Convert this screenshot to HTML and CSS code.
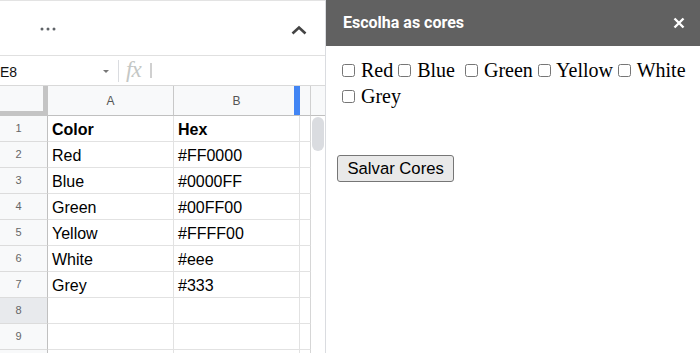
FILE: index.html
```html
<!DOCTYPE html>
<html lang="pt">
<head>
<meta charset="utf-8">
<title>Escolha as cores</title>
<link rel="stylesheet" href="styles.css">
</head>
<body>
<div class="app">
  <div class="sheet">
    <div class="toolbar">
      <svg class="dots" width="16" height="4" viewBox="0 0 16 4"><circle cx="2" cy="2" r="1.5"/><circle cx="8" cy="2" r="1.5"/><circle cx="14" cy="2" r="1.5"/></svg>
      <svg class="caret" width="16" height="10" viewBox="0 0 16 10"><path d="M1.5 8.5 L8 2.5 L14.5 8.5" fill="none" stroke="#444" stroke-width="2.6"/></svg>
    </div>
    <div class="formula">
      <span class="namebox">E8</span>
      <span class="dd"></span>
      <span class="sep"></span>
      <span class="fx">fx</span>
      <span class="cursor"></span>
    </div>
    <div class="gridwrap">
      <div class="grid">
        <div class="corner"></div>
        <div class="colhead">A</div>
        <div class="colhead colB">B<span class="blue"></span></div>
        <div class="colhead extra"></div>

        <div class="rowhead">1</div><div class="cell bold">Color</div><div class="cell bold">Hex</div><div class="cell extra"></div>
        <div class="rowhead">2</div><div class="cell">Red</div><div class="cell">#FF0000</div><div class="cell extra"></div>
        <div class="rowhead">3</div><div class="cell">Blue</div><div class="cell">#0000FF</div><div class="cell extra"></div>
        <div class="rowhead">4</div><div class="cell">Green</div><div class="cell">#00FF00</div><div class="cell extra"></div>
        <div class="rowhead">5</div><div class="cell">Yellow</div><div class="cell">#FFFF00</div><div class="cell extra"></div>
        <div class="rowhead">6</div><div class="cell">White</div><div class="cell">#eee</div><div class="cell extra"></div>
        <div class="rowhead">7</div><div class="cell">Grey</div><div class="cell">#333</div><div class="cell extra"></div>
        <div class="rowhead selected">8</div><div class="cell"></div><div class="cell"></div><div class="cell extra"></div>
        <div class="rowhead">9</div><div class="cell"></div><div class="cell"></div><div class="cell extra"></div>
        <div class="rowhead"></div><div class="cell"></div><div class="cell"></div><div class="cell extra"></div>
      </div>
      <div class="vscroll">
        <div class="vs-head"></div>
        <div class="vs-track"><div class="thumb"></div></div>
      </div>
    </div>
  </div>
  <div class="sidebar">
    <div class="side-head">
      <span class="title">Escolha as cores</span>
      <svg class="close" width="12" height="12" viewBox="0 0 12 12"><path d="M1.5 1.5 L10.5 10.5 M10.5 1.5 L1.5 10.5" stroke="#fff" stroke-width="2.4" fill="none"/></svg>
    </div>
    <div class="side-body">
      <div class="choices"><label><input type="checkbox"> Red</label><label><input type="checkbox"> Blue</label> <label><input type="checkbox"> Green</label><label><input type="checkbox"> Yellow</label><label><input type="checkbox"> White</label><label><input type="checkbox"> Grey</label></div>
      <button class="save" type="button">Salvar Cores</button>
    </div>
  </div>
</div>
</body>
</html>
```
FILE: styles.css
```css
* { box-sizing: border-box; }
html, body { margin: 0; padding: 0; background: #fff; }
body { overflow: hidden; width: 700px; height: 353px; }

.app {
  display: flex;
  height: 353px;
}

.sheet {
  width: 325px;
  flex: none;
  display: flex;
  flex-direction: column;
  font-family: "Liberation Sans", Arial, sans-serif;
}

.toolbar {
  height: 56px;
  border-top: 1px solid #e3e3e3;
  border-bottom: 1px solid #e0e0e0;
  display: flex;
  align-items: center;
  justify-content: space-between;
  padding: 1px 18px 0 40px;
}
.dots { fill: #5f6368; }
.caret { margin-top: 2px; }

.formula {
  height: 30px;
  border-bottom: 1px solid #d9d9d9;
  display: flex;
  align-items: center;
}
.namebox {
  width: 103px;
  font-size: 14px;
  color: #111;
  padding-top: 3px;
}
.dd {
  width: 0; height: 0;
  border-left: 3px solid transparent;
  border-right: 3px solid transparent;
  border-top: 3px solid #777;
  margin-top: 2px;
}
.sep {
  width: 1px;
  height: 22px;
  background: #dadce0;
  margin-left: 9px;
}
.fx {
  font-family: "Liberation Serif", "Times New Roman", serif;
  font-style: italic;
  font-size: 23px;
  color: #c4c7c5;
  margin-left: 7px;
  letter-spacing: -1px;
  line-height: 1;
  margin-top: -2px;
}
.cursor {
  width: 2px;
  height: 15px;
  background: #d0d0d0;
  margin-left: 9px;
}

.gridwrap {
  display: flex;
  flex: 1;
  overflow: hidden;
}

.grid {
  display: grid;
  grid-template-columns: 48px 126px 126px 11px;
  grid-auto-rows: 26px;
  grid-template-rows: 30px;
  width: 311px;
  flex: none;
}

.corner {
  background: #f8f9fa;
  border-right: 5px solid #c4c4c4;
  border-bottom: 5px solid #c4c4c4;
}
.colhead {
  background: #f8f9fa;
  border-right: 1px solid #c8c8c8;
  border-bottom: 1px solid #c0c0c0;
  font-size: 12px;
  color: #555;
  display: flex;
  align-items: center;
  justify-content: center;
  position: relative;
}
.colhead.extra { border-right-color: #d0d0d0; }
.blue {
  position: absolute;
  top: 0;
  bottom: 0;
  right: -1px;
  width: 6px;
  background: #4285f4;
}

.rowhead {
  background: #f8f9fa;
  border-right: 1px solid #c0c0c0;
  border-bottom: 1px solid #dcdcdc;
  font-size: 11px;
  color: #666;
  text-align: center;
  padding-right: 10px;
  padding-top: 6px;
}
.rowhead.selected { background: #e8eaed; }

.cell {
  border-right: 1px solid #e2e2e2;
  border-bottom: 1px solid #e2e2e2;
  font-size: 16px;
  color: #000;
  padding: 2px 0 0 4px;
  line-height: 23px;
  white-space: nowrap;
  overflow: hidden;
}
.cell.bold { font-weight: bold; }
.cell.extra { border-right-color: #d6d6d6; }

.vscroll {
  width: 14px;
  flex: none;
  display: flex;
  flex-direction: column;
}
.vs-head {
  height: 30px;
  background: #f8f9fa;
  border-bottom: 1px solid #c0c0c0;
}
.vs-track {
  flex: 1;
  padding: 1px 1px 0 1px;
}
.thumb {
  width: 12px;
  height: 34px;
  background: #dadce0;
  border-radius: 6px;
}

.sidebar {
  flex: 1;
  border-left: 1px solid #dadce0;
  display: flex;
  flex-direction: column;
}
.side-head {
  height: 46px;
  background: #616161;
  display: flex;
  align-items: center;
  justify-content: space-between;
  padding: 0 15px 0 17px;
}
.title {
  font-family: Roboto, "Liberation Sans", sans-serif;
  font-weight: bold;
  font-size: 16px;
  color: #fff;
  margin-top: -2px;
}
.close { margin-top: -1px; }

.side-body {
  padding: 11px 4px 0 11px;
}
.choices {
  font-family: "Liberation Serif", "Times New Roman", serif;
  font-size: 20px;
  line-height: 26px;
  color: #000;
}
.choices input {
  margin: 3px 1px 0 5px;
  width: 13px;
  height: 13px;
}
.save {
  display: block;
  margin-top: 46px;
  height: 27px;
  padding: 0 9.5px;
  font-family: "Liberation Sans", Arial, sans-serif;
  font-size: 16.67px;
  color: #000;
  background: #e9e9e9;
  border: 1px solid #767676;
  border-radius: 3px;
}
```
